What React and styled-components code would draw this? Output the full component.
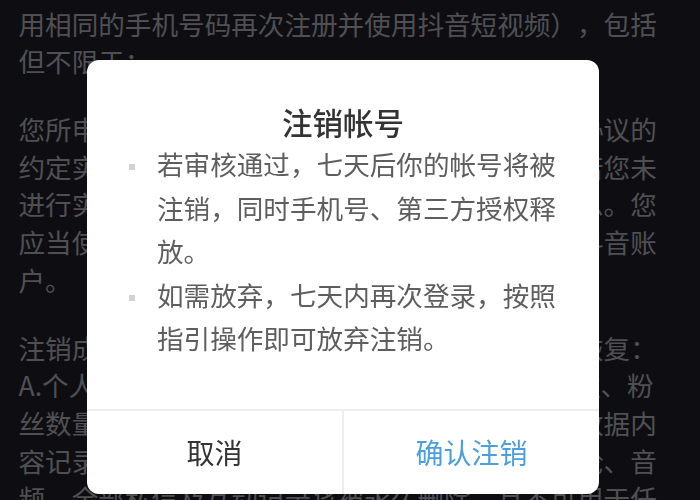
import React from "react";
import styled, { createGlobalStyle } from "styled-components";

const Global = createGlobalStyle`
  html, body {
    margin: 0;
    padding: 0;
    background: #0e0e12;
    width: 700px;
    height: 500px;
    overflow: hidden;
  }
  body {
    font-family: "Noto Sans CJK SC", "Noto Sans", sans-serif;
    text-spacing-trim: space-all;
  }
`;

const Article = styled.main`
  width: 640px;
  padding: 4.6px 0 0 18.5px;
`;

const Paragraph = styled.p`
  margin: 0 0 30px;
  font-size: 26.6px;
  line-height: 37.7px;
  color: #505054;
`;

const Dialog = styled.section`
  position: fixed;
  top: 60px;
  left: 87px;
  width: 512px;
  background: #ffffff;
  border-radius: 12px;
  overflow: hidden;
  display: flex;
  flex-direction: column;
`;

const Title = styled.h2`
  margin: 0;
  padding-top: 42px;
  font-size: 30.5px;
  line-height: 40px;
  font-weight: 500;
  color: #333333;
  text-align: center;
`;

const Notes = styled.ul`
  list-style: none;
  margin: 0;
  padding: 0 40px 49px 42px;
  display: flex;
  flex-direction: column;
`;

const Note = styled.li`
  display: flex;
  align-items: flex-start;
  gap: 22px;
  font-size: 26.6px;
  line-height: 43.5px;
  color: #5e5e5e;
`;

const Bullet = styled.span`
  flex: none;
  width: 6px;
  height: 6px;
  margin-top: 22px;
  background: #d2d2d2;
`;

const NoteText = styled.span`
  flex: 1;
`;

const Actions = styled.footer`
  display: flex;
  border-top: 2px solid #eeeeee;
`;

const Action = styled.button`
  flex: 1;
  height: 83px;
  border: none;
  background: transparent;
  font-family: inherit;
  font-size: 28px;
  color: ${(p) => (p.$primary ? "#4b9fdc" : "#333333")};
  padding: 0;
  & + & {
    border-left: 2px solid #eeeeee;
  }
`;

export default function App() {
  return (
    <>
      <Global />
      <Article>
        <Paragraph>
          用相同的手机号码再次注册并使用抖音短视频），包括但不限于：
        </Paragraph>
        <Paragraph>
          您所申请注销的抖音账户应当依照抖音用户服务协议的约定实名认证，且为您本人注册并使用的账户。若您未进行实名认证，我们将无法确认您的真实身份信息。您应当使用本人有效身份证件申请注销本人名下的抖音账户。
        </Paragraph>
        <Paragraph>
          注销成功后，该账户的以下信息将被清除且无法恢复：A.个人资料、头像、昵称、简介、认证信息、关注、粉丝数量、获赞数、作品及评论等用户交互产生的数据内容记录，包括您已发布的视频、图片、文字、评论、音频、全部私信及互动记录将被永久删除，且不可用于任何用途。
        </Paragraph>
      </Article>
      <Dialog role="dialog" aria-label="注销帐号">
        <Title>注销帐号</Title>
        <Notes>
          <Note>
            <Bullet />
            <NoteText>若审核通过，七天后你的帐号将被注销，同时手机号、第三方授权释放。</NoteText>
          </Note>
          <Note>
            <Bullet />
            <NoteText>如需放弃，七天内再次登录，按照指引操作即可放弃注销。</NoteText>
          </Note>
        </Notes>
        <Actions>
          <Action>取消</Action>
          <Action $primary>确认注销</Action>
        </Actions>
      </Dialog>
    </>
  );
}
